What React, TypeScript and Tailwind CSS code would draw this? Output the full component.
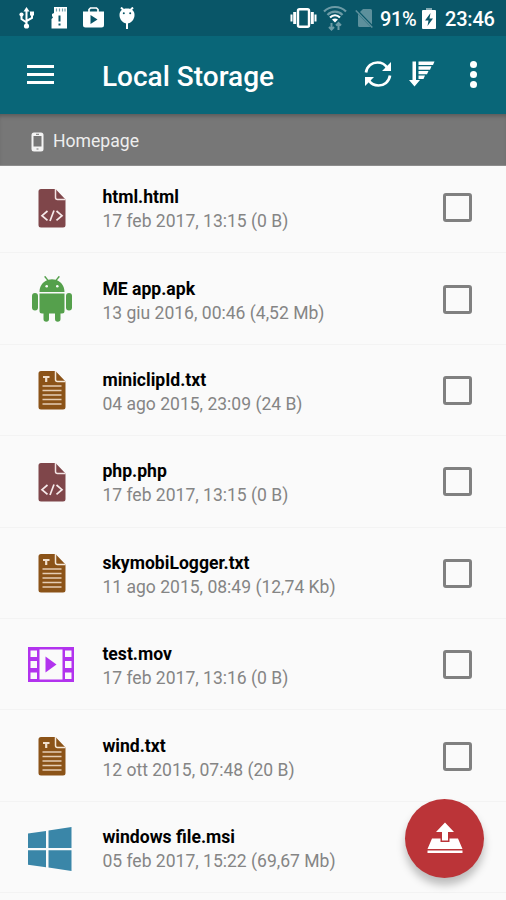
import React, { useState } from 'react';

type FileKind = 'code' | 'apk' | 'text' | 'video' | 'windows';

interface FileEntry {
  name: string;
  info: string;
  kind: FileKind;
}

const files: FileEntry[] = [
  { name: 'html.html', info: '17 feb 2017, 13:15 (0 B)', kind: 'code' },
  { name: 'ME app.apk', info: '13 giu 2016, 00:46 (4,52 Mb)', kind: 'apk' },
  { name: 'miniclipId.txt', info: '04 ago 2015, 23:09 (24 B)', kind: 'text' },
  { name: 'php.php', info: '17 feb 2017, 13:15 (0 B)', kind: 'code' },
  { name: 'skymobiLogger.txt', info: '11 ago 2015, 08:49 (12,74 Kb)', kind: 'text' },
  { name: 'test.mov', info: '17 feb 2017, 13:16 (0 B)', kind: 'video' },
  { name: 'wind.txt', info: '12 ott 2015, 07:48 (20 B)', kind: 'text' },
  { name: 'windows file.msi', info: '05 feb 2017, 15:22 (69,67 Mb)', kind: 'windows' },
];

function CodeIcon() {
  return (
    <svg className="ml-[2px]" width="28" height="40" viewBox="0 0 28 40">
      <path d="M3 1h14.500l10 10.500V37a2.500 2.500 0 0 1-2.500 2.500H3A2.500 2.500 0 0 1 .5 37V3.500A2.500 2.500 0 0 1 3 1z" fill="#7f464a" />
      <path d="M17.500 1v8.500a2 2 0 0 0 2 2h8" fill="none" stroke="#f3e3e3" strokeWidth="1.500" />
      <path d="M9.500 23l-5.500 4.700 5.500 4.700M18.500 23l5.500 4.700-5.500 4.700M16 22.500l-4 10.500" fill="none" stroke="#f6eaea" strokeWidth="1.700" />
    </svg>
  );
}

function AndroidIcon() {
  return (
    <svg className="ml-px" width="40" height="46" viewBox="0 0 40 46" fill="#55a04c">
      <path d="M7.500 16C7.500 10 11 6 15 4.300L12 .8l1.400-.8 2.900 3.800c2.400-.8 5-.8 7.400 0L26.600 0l1.400.8L25 4.300C29 6 32.500 10 32.500 16z" />
      <path d="M7.500 17.500h25V35a2.500 2.500 0 0 1-2.500 2.500h-1.500V43a2.700 2.700 0 0 1-5.500 0v-5.500h-6V43a2.700 2.700 0 0 1-5.500 0v-5.500H10A2.500 2.500 0 0 1 7.500 35z" />
      <rect x="0" y="17" width="6" height="17.500" rx="3" />
      <rect x="34" y="17" width="6" height="17.500" rx="3" />
      <circle cx="14.700" cy="10.300" r="1.300" fill="#fafafa" />
      <circle cx="25.300" cy="10.300" r="1.300" fill="#fafafa" />
    </svg>
  );
}

function TextIcon() {
  return (
    <svg className="ml-[2px]" width="28" height="40" viewBox="0 0 28 40">
      <path d="M3 1h14.500l10 10.500V37a2.500 2.500 0 0 1-2.500 2.500H3A2.500 2.500 0 0 1 .5 37V3.500A2.500 2.500 0 0 1 3 1z" fill="#8b5318" />
      <path d="M17.500 1v8.500a2 2 0 0 0 2 2h8" fill="none" stroke="#f5e8d8" strokeWidth="1.500" />
      <path d="M5 7h6.500M8.200 7v5" fill="none" stroke="#f0dfcd" strokeWidth="2.200" />
      <path d="M4.500 16h19M4.500 20.500h19M4.500 25h19M4.500 29.500h19M4.500 34h19" stroke="#e5cdb4" strokeWidth="1.700" />
    </svg>
  );
}

function VideoIcon() {
  return (
    <svg width="46" height="35" viewBox="0 0 46 35">
      <path
        fillRule="evenodd"
        fill="#b233ee"
        d="M0 0h46v35H0zM2.500 3.500V10H9V3.500zM2.500 14v7H9v-7zM2.500 25.500v6.500H9v-6.500zM11.500 2.500v30h23v-30zM37 3.500V10h6.500V3.500zM37 14v7h6.500v-7zM37 25.500v6.500h6.500v-6.500z"
      />
      <path d="M17.500 9.500v16L28.500 17.500z" fill="#b233ee" />
    </svg>
  );
}

function WindowsIcon() {
  return (
    <svg className="mt-[3px] mr-[3px]" width="44" height="44" viewBox="0 0 44 44" fill="#3a86a8">
      <path d="M0 6.500l18-2.600V21H0zM20.500 3.500L43.500 0v21h-23zM0 23.300h18v17L0 37.700zM20.500 23.300h23V44l-23-3.400z" />
    </svg>
  );
}

const icons: Record<FileKind, () => React.JSX.Element> = {
  code: CodeIcon,
  apk: AndroidIcon,
  text: TextIcon,
  video: VideoIcon,
  windows: WindowsIcon,
};

function StatusBar() {
  return (
    <div className="flex h-9 items-center justify-between bg-[#095668] pr-[10px] pl-[19px] text-white">
      <div className="flex items-center gap-[16px]">
        <svg width="16" height="22" viewBox="0 0 16 22" fill="white">
          <path d="M7.500 0l3 4.500h-6z" />
          <path d="M7.500 3v15M7.500 15.500l-5-3.500V8M7.500 14l5.500-3V6" fill="none" stroke="white" strokeWidth="2" />
          <circle cx="2.500" cy="7.500" r="2.100" />
          <circle cx="7.500" cy="19" r="2.600" />
          <path d="M11 4.500h4v4h-4z" />
        </svg>
        <svg width="16" height="22" viewBox="0 0 16 22">
          <path d="M3 0h13v21.500H.5V12L2 10.500 1 9V7l2-1z" fill="white" />
          <path d="M5.500 1.500v3M8.500 1.500v3M11.500 1.500v3M14 1.500v3" stroke="#73a0aa" strokeWidth="1.200" />
          <path d="M8.500 8.500v6M8.500 16.500v2" stroke="#095668" strokeWidth="2" />
        </svg>
        <svg width="21" height="22" viewBox="0 0 21 22">
          <path d="M6 5V2.500L7.500 1h6L15 2.500V5" fill="none" stroke="white" strokeWidth="1.700" />
          <path d="M0 4.500h21V18a2.500 2.500 0 0 1-2.500 2.500h-16A2.500 2.500 0 0 1 0 18z" fill="white" />
          <path d="M7.500 8v9l7-4.500z" fill="#095668" />
        </svg>
        <svg className="-ml-px" width="16" height="22" viewBox="0 0 16 22">
          <path d="M2 .5L4.500 3M14 .5L11.500 3M8 14v8" stroke="white" strokeWidth="2" />
          <path d="M8 1.500c5 0 7.500 2.500 7.500 6.500S12.500 16.500 8 16.500.5 12 .5 8 3 1.500 8 1.500z" fill="white" />
          <circle cx="4.800" cy="6.200" r="1" fill="#095668" />
          <circle cx="11.200" cy="6.200" r="1" fill="#095668" />
        </svg>
      </div>

      <div className="flex items-center">
        <svg width="27" height="20" viewBox="0 0 27 20" fill="none" stroke="white">
          <rect x="8" y="1.200" width="11" height="17.600" rx="1.500" strokeWidth="2.400" />
          <path d="M4.700 4v12M22.300 4v12" strokeWidth="3" />
          <path d="M1.500 6.500v7M25.500 6.500v7" strokeWidth="2" />
        </svg>
        <svg className="ml-1.5" width="24" height="26" viewBox="0 0 24 26" fill="none">
          <path d="M1 6.500c6-6 16-6 22 0M4.500 10c4-4.500 11-4.500 15 0" stroke="#6d9ba6" strokeWidth="2.200" />
          <path d="M7 12.500c3-3 7-3 10 0" stroke="white" strokeWidth="2.200" />
          <path d="M9 14.500c2-1.500 4-1.500 6 0l-3 3z" fill="white" />
          <path d="M8.500 25v-7M6 22l2.500 2.500L11 22M15.500 25v-7M13 20.500l2.500-2.500 2.500 2.500" stroke="#6d9ba6" strokeWidth="2" />
        </svg>
        <svg className="ml-2" width="19" height="20" viewBox="0 0 19 20">
          <path d="M8 1h7.500a1.500 1.500 0 0 1 1.500 1.500v14L5 4zM3 6l12.500 13H4.500A1.500 1.500 0 0 1 3 17.500z" fill="#5d909c" />
          <path d="M.8 2.500l16.500 17" stroke="#5d909c" strokeWidth="1.600" />
        </svg>
        <span className="ml-1.5 w-[37px] pt-[2px] text-[20px] leading-6 font-medium tracking-[-0.4px] whitespace-nowrap">91%</span>
        <svg className="ml-[5px]" width="14" height="21" viewBox="0 0 14 21">
          <path d="M4 0h6v2H4z" fill="#84abb4" />
          <path d="M1 2h12a1 1 0 0 1 1 1v17a1 1 0 0 1-1 1H1a1 1 0 0 1-1-1V3a1 1 0 0 1 1-1z" fill="white" />
          <path d="M8.500 5L3 12.500h3.500L5.500 18 11 10.500H7.500z" fill="#095668" />
        </svg>
        <span className="ml-[9px] w-[51px] pt-[2px] text-[20px] leading-6 font-medium tracking-[-0.2px] whitespace-nowrap">23:46</span>
      </div>
    </div>
  );
}

function Toolbar() {
  return (
    <div className="flex h-[78px] items-center bg-[#096678] pr-[28px] pb-[2px] pl-[27px]">
      <button aria-label="Menu" className="flex w-[27px] flex-col gap-[5px] pt-px">
        <span className="h-[3px] bg-white" />
        <span className="h-[3px] bg-white" />
        <span className="h-[3px] bg-white" />
      </button>
      <h1 className="ml-[48px] flex-1 pt-[6px] text-[28px] leading-9 font-medium whitespace-nowrap text-white">Local Storage</h1>
      <button aria-label="Refresh">
        <svg width="28" height="28" viewBox="0 0 28 28">
          <path d="M2 12.500C3 6 8 2.500 13.500 2.500c4 0 7.500 1.800 9.500 5M26 15.500C25 22 20 25.500 14.500 25.500c-4 0-7.500-1.800-9.500-5" fill="none" stroke="white" strokeWidth="2.700" />
          <path d="M27 2v9h-9zM1 26v-9h9z" fill="white" />
        </svg>
      </button>
      <button aria-label="Sort" className="ml-[17px]">
        <svg width="26" height="28" viewBox="0 0 26 28" fill="white">
          <path d="M3.500 1.500h3.500V20h4L5.500 26.500 0 20h3.500z" />
          <path d="M9.500 1.500h16l-1.500 3.500H9.500zM9.500 6.300h13L21 9.700H9.500zM9.500 11h10L18 14.300H9.500zM9.500 15.600h6.500L14.500 19h-5z" />
        </svg>
      </button>
      <button aria-label="More" className="ml-[34px] flex w-[9px] flex-col items-center gap-[3px]">
        <span className="size-[7px] rounded-full bg-white" />
        <span className="size-[7px] rounded-full bg-white" />
        <span className="size-[7px] rounded-full bg-white" />
      </button>
    </div>
  );
}

function FileRow({ file }: { file: FileEntry }) {
  const [checked, setChecked] = useState(false);
  const Icon = icons[file.kind];

  return (
    <li className="flex h-[91.4px] items-center border-b border-[#f3f3f3] pt-px pr-[34px]">
      <div className="flex w-[102.4px] justify-center">
        <Icon />
      </div>
      <div className="flex-1 pt-[3px] whitespace-nowrap">
        <p className="text-[17.6px] leading-6 font-bold text-black">{file.name}</p>
        <p className="text-[17.55px] leading-6 text-[#858585]">{file.info}</p>
      </div>
      <button
        role="checkbox"
        aria-checked={checked}
        aria-label={file.name}
        onClick={() => setChecked(!checked)}
        className={`size-[29px] rounded-[3px] border-3 border-[#808080] ${checked ? 'bg-[#096678]' : ''}`}
      />
    </li>
  );
}

export default function App() {
  return (
    <div className="relative flex h-[900px] w-[506px] flex-col overflow-hidden bg-[#fafafa] font-[Roboto,sans-serif]">
      <StatusBar />
      <Toolbar />
      <nav className="relative flex h-[52px] shrink-0 items-center border-b border-[#8d8d8d] bg-[#777777] pt-[4px] pl-[31px] shadow-[inset_0_4px_4px_-2px_rgba(0,0,0,0.25)]">
        <svg width="13" height="20" viewBox="0 0 13 20">
          <rect x=".5" y=".5" width="12" height="19" rx="2.500" fill="#f3f3f3" />
          <path d="M2.500 4h8v10.500h-8z" fill="#777777" />
          <path d="M5 2.300h3M5.500 17h2" stroke="#777777" />
        </svg>
        <span className="ml-[9px] text-[17.6px] text-[#eeeeee]">Homepage</span>
      </nav>
      <ul className="-mt-1 flex-1">
        {files.map(file => (
          <FileRow key={file.name} file={file} />
        ))}
      </ul>
      <button
        aria-label="Upload"
        className="absolute right-[22px] bottom-[22px] flex size-[79px] items-center justify-center rounded-full bg-[#bb3438] pb-[2px] shadow-[0_7px_9px_rgba(0,0,0,0.25)]"
      >
        <svg width="36" height="32" viewBox="0 0 36 32" fill="white">
          <path d="M5 16.500h8.500V20h9v-3.500H31L35.500 27H.5z" />
          <path d="M.5 28.500h35V31H.5z" />
          <path d="M18 .5l9 9.500h-6v8.500h-6V10H9z" />
        </svg>
      </button>
    </div>
  );
}
